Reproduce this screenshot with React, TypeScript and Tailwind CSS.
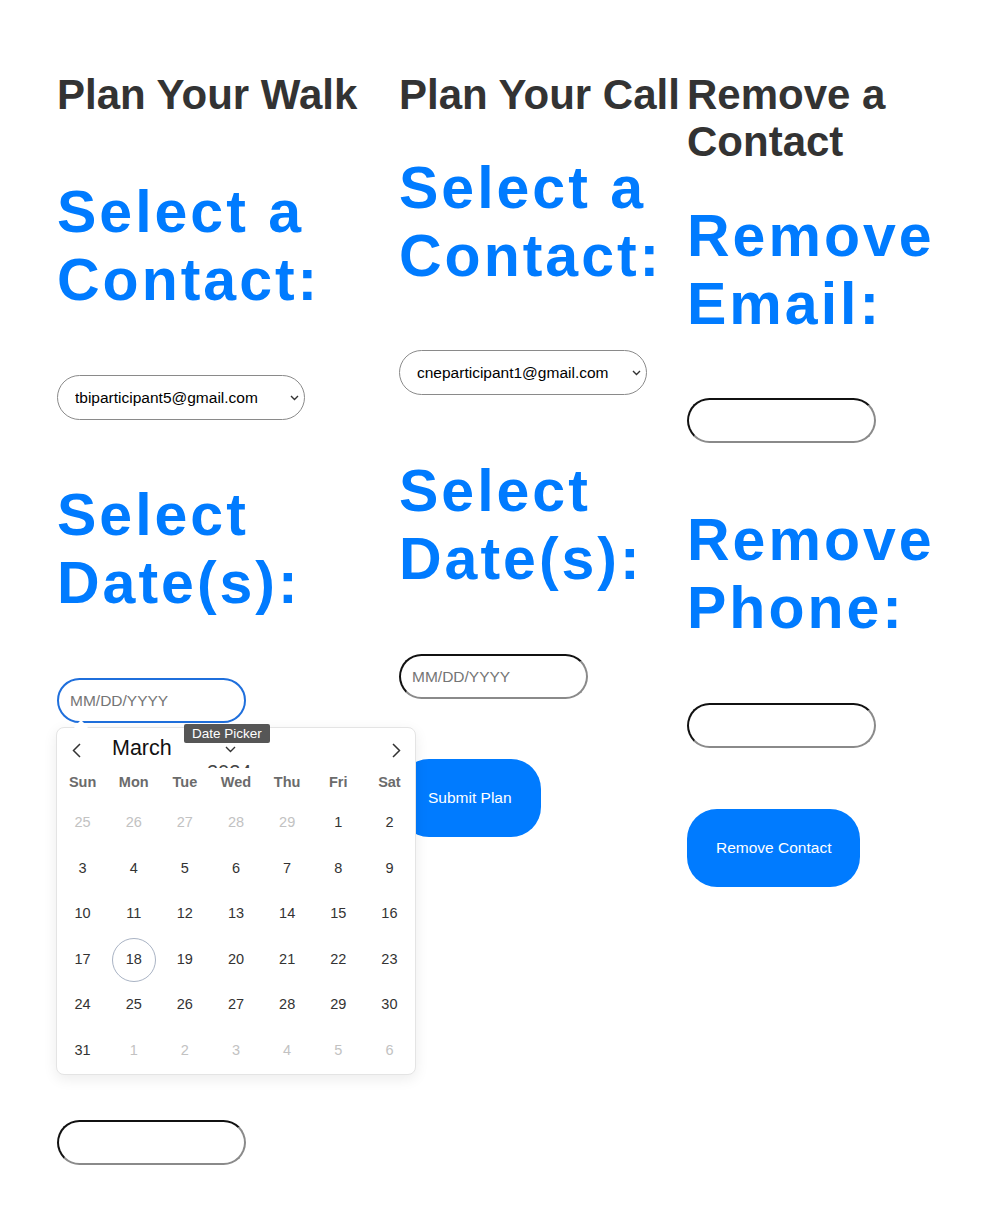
import React from "react";

const FONT = "font-['Liberation_Sans',Arial,Helvetica,sans-serif]";

const H1 = ({ children }: { children: React.ReactNode }) => (
  <h1 className="text-[42px] font-bold leading-[47px] text-[#333]">{children}</h1>
);

const H2 = ({ children, className = "" }: { children: React.ReactNode; className?: string }) => (
  <h2 className={`text-[59px] font-bold leading-[68px] tracking-[3px] text-[#007bff] ${className}`}>
    {children}
  </h2>
);

function ContactSelect({ value, className = "" }: { value: string; className?: string }) {
  return (
    <div className={`relative w-[248px] ${className}`}>
      <select
        defaultValue={value}
        className="h-[45px] w-full appearance-none rounded-full border border-[#8a8a8a] bg-white pl-[17px] pr-8 text-[15.5px] text-black outline-none"
      >
        <option value={value}>{value}</option>
      </select>
      {/* chevron */}
      <svg
        className="pointer-events-none absolute right-[6px] top-1/2 -translate-y-1/2"
        width="9"
        height="6"
        viewBox="0 0 9 6"
        fill="none"
        stroke="#333"
        strokeWidth="1.4"
      >
        <path d="M1 1l3.5 3.5L8 1" />
      </svg>
    </div>
  );
}

const insetBorder =
  "border-2 border-t-[#111] border-l-[#111] border-b-[#8a8a8a] border-r-[#8a8a8a]";

function TextInput({ placeholder, className = "", focused = false }: { placeholder?: string; className?: string; focused?: boolean }) {
  return (
    <input
      type="text"
      placeholder={placeholder}
      className={`block h-[45px] w-[189px] rounded-full bg-white pl-[11px] text-[15.5px] text-black outline-none placeholder:text-[#757575] ${
        focused ? "border-2 border-[#1f6fdc]" : insetBorder
      } ${className}`}
    />
  );
}

const BlueButton = ({ children, className = "" }: { children: React.ReactNode; className?: string }) => (
  <button className={`block h-[78px] rounded-[30px] bg-[#007bff] px-[29px] text-[15.5px] text-white ${className}`}>
    {children}
  </button>
);

const WEEKDAYS = ["Sun", "Mon", "Tue", "Wed", "Thu", "Fri", "Sat"];

// march 2024 grid, leading/trailing days from neighbour months
const DAYS: { d: number; out?: boolean }[] = [
  ...[25, 26, 27, 28, 29].map((d) => ({ d, out: true })),
  ...Array.from({ length: 31 }, (_, i) => ({ d: i + 1 })),
  ...[1, 2, 3, 4, 5, 6].map((d) => ({ d, out: true })),
];

function DatePickerPopup() {
  return (
    <div className="absolute left-[-1px] top-[49px] z-10 w-[360px] rounded-lg border border-[#e4e4e4] bg-white shadow-[0_4px_14px_rgba(0,0,0,0.08)]">
      {/* arrow notch */}
      <div className="absolute left-[19px] top-[-6px] h-[10px] w-[10px] rotate-45 bg-white" />

      {/* header */}
      <div className="relative flex h-[42px] items-center pl-[15px] pr-[14px]">
        <svg className="mt-[3px]" width="9" height="15" viewBox="0 0 9 15" fill="none" stroke="#333" strokeWidth="1.5">
          <path d="M8 1L1.5 7.5 8 14" />
        </svg>
        <span className="ml-[31px] text-[21.5px] leading-none text-[#111]">March</span>
        <svg className="ml-[53px]" width="11" height="7" viewBox="0 0 11 7" fill="none" stroke="#333" strokeWidth="1.4">
          <path d="M1 1l4.5 4.5L10 1" />
        </svg>
        <svg className="ml-auto mt-[3px]" width="9" height="15" viewBox="0 0 9 15" fill="none" stroke="#333" strokeWidth="1.5">
          <path d="M1 1l6.5 6.5L1 14" />
        </svg>

        {/* year select, mostly clipped */}
        <div className="absolute left-[150px] top-[36px] h-[4px] overflow-hidden text-[20px] leading-[20px] text-[#444]">
          <div className="-mt-[2px]">2024</div>
        </div>

        {/* tooltip */}
        <div className="absolute left-[127px] top-[-4px] rounded-[2px] bg-[#565656] px-[8px] text-[13.5px] leading-[19px] text-white">
          Date Picker
        </div>
      </div>

      {/* weekdays */}
      <div className="grid h-[26px] grid-cols-7 items-center text-center text-[14.5px] font-bold text-[#6b6b6b]">
        {WEEKDAYS.map((w) => (
          <span key={w}>{w}</span>
        ))}
      </div>

      {/* days */}
      <div className="mt-[4px] grid grid-cols-7 text-center text-[14.5px]">
        {DAYS.map((day, i) => (
          <div key={i} className="flex h-[45.6px] items-center justify-center">
            {day.d === 18 && !day.out ? (
              <span className="flex h-[44px] w-[44px] items-center justify-center rounded-full border border-[#a9b3c4] text-[#333]">
                18
              </span>
            ) : (
              <span className={day.out ? "text-[#c2c2c2]" : "text-[#333]"}>{day.d}</span>
            )}
          </div>
        ))}
      </div>
    </div>
  );
}

export default function App() {
  return (
    <div className={`min-h-[1210px] bg-white ${FONT}`}>
      <div className="flex pl-[57px] pt-[71px]">
        {/* walk */}
        <div className="w-[342px] shrink-0">
          <H1>Plan Your Walk</H1>
          <H2 className="mt-[60px]">Select a Contact:</H2>
          <ContactSelect value="tbiparticipant5@gmail.com" className="mt-[61px]" />
          <H2 className="mt-[61px]">Select Date(s):</H2>
          <div className="relative mt-[61px]">
            <TextInput placeholder="MM/DD/YYYY" focused />
            <DatePickerPopup />
          </div>
          <TextInput className="mt-[397px]" />
        </div>

        {/* call */}
        <div className="w-[288px] shrink-0">
          <H1>Plan Your Call</H1>
          <H2 className="mt-[36px]">Select a Contact:</H2>
          <ContactSelect value="cneparticipant1@gmail.com" className="mt-[60px]" />
          <H2 className="mt-[62px]">Select Date(s):</H2>
          <TextInput placeholder="MM/DD/YYYY" className="mt-[61px]" />
          <BlueButton className="mt-[60px]">Submit Plan</BlueButton>
        </div>

        {/* remove */}
        <div className="min-w-0 flex-1">
          <H1>Remove a Contact</H1>
          <H2 className="mt-[37px]">Remove Email:</H2>
          <TextInput className="mt-[60px]" />
          <H2 className="mt-[63px]">Remove Phone:</H2>
          <TextInput className="mt-[61px]" />
          <BlueButton className="mt-[61px]">Remove Contact</BlueButton>
        </div>
      </div>
    </div>
  );
}
